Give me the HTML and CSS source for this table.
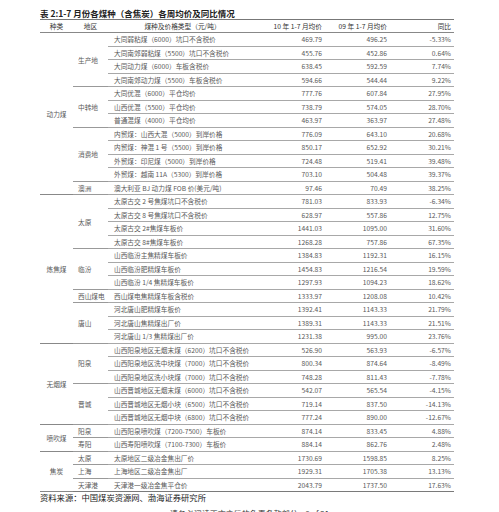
FILE: index.html
```html
<!DOCTYPE html>
<html lang="zh-CN">
<head>
<meta charset="utf-8">
<title>表2</title>
<link rel="stylesheet" href="styles.css">
</head>
<body>
<div class="page">
  <div class="title">表 2:1-7 月份各煤种（含焦炭）各周均价及同比情况</div>
  <table class="data">
    <colgroup>
      <col class="c-kind"><col class="c-area"><col class="c-desc"><col class="c-num"><col class="c-num2"><col class="c-pct">
    </colgroup>
    <thead>
      <tr>
        <th class="kind">种类</th>
        <th class="area-h">地区</th>
        <th class="desc-h">煤种及价格类型（元/吨）</th>
        <th class="num">10 年 1-7 月均价</th>
        <th class="num">09 年 1-7 月均价</th>
        <th class="pct">同比</th>
      </tr>
    </thead>
    <tbody>
      <tr><td class="kind" rowspan="12">动力煤</td><td class="area" rowspan="4">生产地</td><td class="desc">大同弱粘煤（6000）坑口不含税价</td><td class="num">469.79</td><td class="num">496.25</td><td class="pct">-5.33%</td></tr>
      <tr><td class="desc">大同南郊弱粘煤（5500）坑口不含税价</td><td class="num">455.76</td><td class="num">452.86</td><td class="pct">0.64%</td></tr>
      <tr><td class="desc">大同动力煤（6000）车板含税价</td><td class="num">638.45</td><td class="num">592.59</td><td class="pct">7.74%</td></tr>
      <tr><td class="desc">大同南郊动力煤（5500）车板含税价</td><td class="num">594.66</td><td class="num">544.44</td><td class="pct">9.22%</td></tr>
      <tr><td class="area" rowspan="3">中转地</td><td class="desc">大同优混（6000）平仓均价</td><td class="num">777.76</td><td class="num">607.84</td><td class="pct">27.95%</td></tr>
      <tr><td class="desc">山西优混（5500）平仓均价</td><td class="num">738.79</td><td class="num">574.05</td><td class="pct">28.70%</td></tr>
      <tr><td class="desc">普通混煤（4000）平仓均价</td><td class="num">463.97</td><td class="num">363.97</td><td class="pct">27.48%</td></tr>
      <tr><td class="area" rowspan="4">消费地</td><td class="desc">内贸煤：山西大混（5000）到岸价格</td><td class="num">776.09</td><td class="num">643.10</td><td class="pct">20.68%</td></tr>
      <tr><td class="desc">内贸煤：神混 1 号（5500）到岸价格</td><td class="num">850.17</td><td class="num">652.92</td><td class="pct">30.21%</td></tr>
      <tr><td class="desc">外贸煤：印尼煤（5000）到岸价格</td><td class="num">724.48</td><td class="num">519.41</td><td class="pct">39.48%</td></tr>
      <tr><td class="desc">外贸煤：越南 11A（5300）到岸价格</td><td class="num">703.10</td><td class="num">504.48</td><td class="pct">39.37%</td></tr>
      <tr><td class="area">澳洲</td><td class="desc">澳大利亚 BJ 动力煤 FOB 价(美元/吨)</td><td class="num">97.46</td><td class="num">70.49</td><td class="pct">38.25%</td></tr>

      <tr><td class="kind" rowspan="11">炼焦煤</td><td class="area" rowspan="4">太原</td><td class="desc">太原古交 2 号焦煤坑口不含税价</td><td class="num">781.03</td><td class="num">833.93</td><td class="pct">-6.34%</td></tr>
      <tr><td class="desc">太原古交 8 号焦煤坑口不含税价</td><td class="num">628.97</td><td class="num">557.86</td><td class="pct">12.75%</td></tr>
      <tr><td class="desc">太原古交 2#焦煤车板价</td><td class="num">1441.03</td><td class="num">1095.00</td><td class="pct">31.60%</td></tr>
      <tr><td class="desc">太原古交 8#焦煤车板价</td><td class="num">1268.28</td><td class="num">757.86</td><td class="pct">67.35%</td></tr>
      <tr><td class="area" rowspan="3">临汾</td><td class="desc">山西临汾主焦精煤车板价</td><td class="num">1384.83</td><td class="num">1192.31</td><td class="pct">16.15%</td></tr>
      <tr><td class="desc">山西临汾肥精煤车板价</td><td class="num">1454.83</td><td class="num">1216.54</td><td class="pct">19.59%</td></tr>
      <tr><td class="desc">山西临汾 1/4 焦精煤车板价</td><td class="num">1297.93</td><td class="num">1094.23</td><td class="pct">18.62%</td></tr>
      <tr><td class="area">西山煤电</td><td class="desc">西山煤电焦精煤车板含税价</td><td class="num">1333.97</td><td class="num">1208.08</td><td class="pct">10.42%</td></tr>
      <tr><td class="area" rowspan="3">唐山</td><td class="desc">河北唐山肥精煤车板价</td><td class="num">1392.41</td><td class="num">1143.33</td><td class="pct">21.79%</td></tr>
      <tr><td class="desc">河北唐山焦精煤出厂价</td><td class="num">1389.31</td><td class="num">1143.33</td><td class="pct">21.51%</td></tr>
      <tr><td class="desc">河北唐山 1/3 焦精煤出厂价</td><td class="num">1231.38</td><td class="num">995.00</td><td class="pct">23.76%</td></tr>

      <tr><td class="kind" rowspan="6">无烟煤</td><td class="area" rowspan="3">阳泉</td><td class="desc">山西阳泉地区无烟末煤（6200）坑口不含税价</td><td class="num">526.90</td><td class="num">563.93</td><td class="pct">-6.57%</td></tr>
      <tr><td class="desc">山西阳泉地区洗中块煤（7000）坑口不含税价</td><td class="num">800.34</td><td class="num">874.64</td><td class="pct">-8.49%</td></tr>
      <tr><td class="desc">山西阳泉地区洗小块煤（7000）坑口不含税价</td><td class="num">748.28</td><td class="num">811.43</td><td class="pct">-7.78%</td></tr>
      <tr><td class="area" rowspan="3">晋城</td><td class="desc">山西晋城地区无烟末煤（6000）坑口不含税价</td><td class="num">542.07</td><td class="num">565.54</td><td class="pct">-4.15%</td></tr>
      <tr><td class="desc">山西晋城地区无烟小块（6500）坑口不含税价</td><td class="num">719.14</td><td class="num">837.50</td><td class="pct">-14.13%</td></tr>
      <tr><td class="desc">山西晋城地区无烟中块（6800）坑口不含税价</td><td class="num">777.24</td><td class="num">890.00</td><td class="pct">-12.67%</td></tr>

      <tr><td class="kind" rowspan="2">喷吹煤</td><td class="area">阳泉</td><td class="desc">山西阳泉喷吹煤（7200-7500）车板价</td><td class="num">874.14</td><td class="num">833.45</td><td class="pct">4.88%</td></tr>
      <tr><td class="area">寿阳</td><td class="desc">山西寿阳喷吹煤（7100-7300）车板价</td><td class="num">884.14</td><td class="num">862.76</td><td class="pct">2.48%</td></tr>

      <tr><td class="kind" rowspan="3">焦炭</td><td class="area">太原</td><td class="desc">太原地区二级冶金焦出厂价</td><td class="num">1730.69</td><td class="num">1598.85</td><td class="pct">8.25%</td></tr>
      <tr><td class="area">上海</td><td class="desc">上海地区二级冶金焦出厂</td><td class="num">1929.31</td><td class="num">1705.38</td><td class="pct">13.13%</td></tr>
      <tr class="last"><td class="area">天津港</td><td class="desc">天津港一级冶金焦平仓价</td><td class="num">2043.79</td><td class="num">1737.50</td><td class="pct">17.63%</td></tr>
    </tbody>
  </table>
  <div class="source">资料来源：中国煤炭资源网、渤海证券研究所</div>
</div>
<div class="disclaimer">请务必阅读正文之后的免责条款部分&nbsp;&nbsp;&nbsp;&nbsp;6 of 21</div>
</body>
</html>
```
FILE: styles.css
```css
html, body {
  margin: 0;
  padding: 0;
  background: #ffffff;
}

body {
  font-family: "Noto Sans CJK SC", "Noto Sans", sans-serif;
  color: #5a5a5a;
  overflow: hidden;
  height: 512px;
}

.page {
  padding: 7px 0 0 40px;
}

.title {
  font-size: 8.5px;
  font-weight: bold;
  line-height: 12px;
  height: 12px;
  color: #222222;
  white-space: nowrap;
}

.data {
  border-collapse: collapse;
  table-layout: fixed;
  width: 414px;
  font-size: 6.7px;
}

.c-kind { width: 33px; }
.c-area { width: 35px; }
.c-desc { width: 155px; }
.c-num { width: 64px; }
.c-num2 { width: 65px; }
.c-pct { width: 62px; }

.data th,
.data td {
  padding: 0;
  height: 12.5px;
  line-height: 12px;
  white-space: nowrap;
  overflow: hidden;
  border-bottom: 1px solid #a8a8a8;
  font-weight: normal;
}

.data thead th {
  border-top: 1px solid #777777;
  border-bottom: 1px solid #888888;
  height: 12px;
  color: #333333;
}

.data tr.last td {
  border-bottom: 1.5px solid #7a7a7a;
}

.data td.kind {
  border-bottom: 1px solid #888888;
}

.data td.kind,
.data th.kind {
  text-align: center;
}

.data th.area-h {
  text-align: center;
}

.data td.area {
  text-align: left;
  padding-left: 5px;
  border-bottom: 1px solid #999999;
}

.data td.desc {
  text-align: left;
  padding-left: 6px;
}

.data th.desc-h {
  text-align: center;
  padding-right: 6px;
}

.data .num {
  text-align: right;
  padding-right: 5px;
}

.data .pct {
  text-align: right;
  padding-right: 3px;
}

.source {
  font-size: 8.3px;
  line-height: 10px;
  color: #222222;
  white-space: nowrap;
}

.disclaimer {
  margin-top: 7px;
  font-size: 8px;
  line-height: 10px;
  text-align: center;
  color: #333333;
  white-space: nowrap;
}
```
